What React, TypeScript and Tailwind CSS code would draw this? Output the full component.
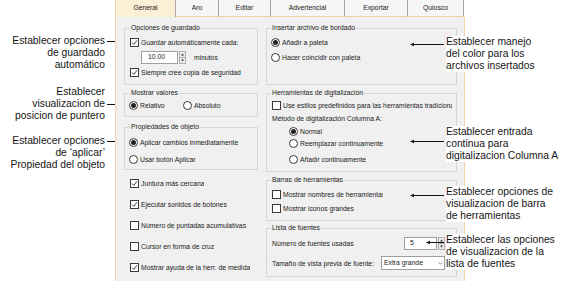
import React from 'react'

const ui = "text-[6.8px] leading-[9px] text-[#1a1a1a] whitespace-nowrap"

function Box({ checked }: { checked?: boolean }) {
  return (
    <span className="w-[9px] h-[9px] shrink-0 border border-[#3a3a3a] bg-white flex items-center justify-center">
      {checked && (
        <svg viewBox="0 0 7 7" className="w-[7px] h-[7px]"><path d="M1 3.6 L2.8 5.4 L6 1.3" fill="none" stroke="#2a2a2a" strokeWidth="0.9" /></svg>
      )}
    </span>
  )
}

function Dot({ on }: { on?: boolean }) {
  return (
    <span className="w-[9px] h-[9px] shrink-0 rounded-full border border-[#3a3a3a] bg-white flex items-center justify-center">
      {on && <span className="w-[5px] h-[5px] rounded-full bg-[#222]" />}
    </span>
  )
}

function Check({ label, checked, className = '', clip }: { label: string; checked?: boolean; className?: string; clip?: string }) {
  return (
    <div className={`flex items-center gap-[2px] h-[9px] overflow-hidden ${className}`}>
      <Box checked={checked} />
      <span className={`${ui} overflow-hidden ${clip ?? ''}`}>{label}</span>
    </div>
  )
}

function Radio({ label, on, className = '' }: { label: string; on?: boolean; className?: string }) {
  return (
    <div className={`flex items-center gap-[2px] h-[9px] ${className}`}>
      <Dot on={on} />
      <span className={ui}>{label}</span>
    </div>
  )
}

function Spinner() {
  return (
    <span className="w-[7px] h-[13px] shrink-0 border border-[#b0b0b0] bg-[#ececec] flex flex-col">
      <svg viewBox="0 0 5 5" className="w-[5px] h-[5.5px]"><path d="M1 3.6 L2.5 1.6 L4 3.6Z" fill="#333" /></svg>
      <span className="h-px bg-[#b0b0b0]" />
      <svg viewBox="0 0 5 5" className="w-[5px] h-[5.5px]"><path d="M1 1.4 L2.5 3.4 L4 1.4Z" fill="#333" /></svg>
    </span>
  )
}

function Group({ title, children, className = '' }: { title: string; children: React.ReactNode; className?: string }) {
  return (
    <fieldset className={`border border-[#d6d6d6] px-[5px] min-w-0 ${className}`}>
      <legend className="px-[1px] text-[6.8px] leading-[8px] text-[#1a1a1a] whitespace-nowrap">{title}</legend>
      {children}
    </fieldset>
  )
}

function ArrowLeft({ w }: { w: number }) {
  return (
    <svg width={w} height={5} className="shrink-0" viewBox={`0 0 ${w} 5`}>
      <path d={`M0 2.5 L4 0.8 L4 4.2Z`} fill="#111" />
      <line x1="3" y1="2.5" x2={w} y2="2.5" stroke="#111" strokeWidth="1" />
    </svg>
  )
}

function ArrowRight() {
  return (
    <svg width={15} height={5} viewBox="0 0 15 5" className="shrink-0 ml-[2px] mr-[-17px]">
      <line x1="0" y1="2.5" x2="12" y2="2.5" stroke="#111" strokeWidth="1" />
      <path d="M15 2.5 L11 0.8 L11 4.2Z" fill="#111" />
    </svg>
  )
}

const tabs = [
  { label: 'General', w: 'w-[61px]' },
  { label: 'Aro', w: 'w-[43px]' },
  { label: 'Editar', w: 'w-[52px]' },
  { label: 'Advertencial', w: 'w-[74px]' },
  { label: 'Exportar', w: 'w-[63px]' },
  { label: 'Quiosco', w: 'w-[56px]' },
]

export default function App() {
  return (
    <div className="relative w-[569px] h-[281px] bg-white overflow-hidden flex font-['Liberation_Sans',Arial,sans-serif]">
      {/* left callouts */}
      <div className="w-[115px] shrink-0 flex flex-col items-end pr-[10px] text-[10.3px] leading-[12px] text-[#151515] text-right">
        <div className="mt-[35px] flex flex-col items-end">
          <div className="flex items-center">Establecer opciones<ArrowRight /></div>
          <div>de guardado</div>
          <div>automático</div>
        </div>
        <div className="mt-[15px] flex flex-col items-end">
          <div>Establecer</div>
          <div className="flex items-center">visualizacion de<ArrowRight /></div>
          <div>posicion de puntero</div>
        </div>
        <div className="mt-[13px] flex flex-col items-end">
          <div className="flex items-center">Establecer opciones<ArrowRight /></div>
          <div>de ‘aplicar’</div>
          <div>Propiedad del objeto</div>
        </div>
      </div>

      {/* dialog */}
      <div className="w-[350px] shrink-0 flex flex-col">
        <div className="flex h-[17px]">
          {tabs.map((t, i) => (
            <div
              key={t.label}
              className={`${t.w} h-[17px] flex items-center justify-center text-[6.8px] text-[#1a1a1a] border-r border-[#a6a6a6] ${i === 0 ? 'bg-[#fbefd6] border-l border-l-[#efd7a3]' : 'bg-[#f6f6f6] border-b border-b-[#efd7a3]'}`}
            >
              {t.label}
            </div>
          ))}
        </div>
        <div className="flex-1 flex gap-[8px] pl-[8px] pr-[6px] pt-[7px] bg-[#f0f0f0] border-l border-r border-[#efd7a3]">
          {/* left column */}
          <div className="w-[134px] shrink-0 flex flex-col">
            <Group title="Opciones de guardado">
              <div className="pt-[6px] pb-[7px] flex flex-col">
                <Check checked label="Guardar automáticamente cada:" />
                <div className="mt-[4px] h-[13px] flex items-center ml-[11px]">
                  <span className="w-[37px] h-[13px] bg-white border border-[#a0a0a0] pl-[6px] flex items-center text-[6.8px] text-[#1a1a1a]">10.00</span>
                  <span className="ml-[1px]"><Spinner /></span>
                  <span className={`${ui} ml-[8px]`}>minutos</span>
                </div>
                <Check checked className="mt-[4px]" label="Siempre cree copia de seguridad" />
              </div>
            </Group>
            <Group title="Mostrar valores" className="mt-[4px]">
              <div className="pt-[4px] pb-[6px] flex -ml-[1px]">
                <Radio on label="Relativo" className="w-[54px]" />
                <Radio label="Absoluto" />
              </div>
            </Group>
            <Group title="Propiedades de objeto" className="mt-[6px]">
              <div className="pt-[7px] pb-[5px] flex flex-col -ml-[1px]">
                <Radio on label="Aplicar cambios inmediatamente" />
                <Radio className="mt-[8px]" label="Usar botón Aplicar" />
              </div>
            </Group>
            <div className="mt-[9px] pl-[6px] flex flex-col gap-[12px]">
              <Check checked label="Juntura más cercana" />
              <Check checked label="Ejecutar sonidos de botones" />
              <Check label="Número de puntadas acumulativas" />
              <Check label="Cursor en forma de cruz" />
              <Check checked label="Mostrar ayuda de la herr. de medida" />
            </div>
          </div>

          {/* right column */}
          <div className="w-[191px] shrink-0 flex flex-col">
            <Group title="Insertar archivo de bordado" className="!px-[4px]">
              <div className="pt-[6px] pb-[22px] flex flex-col">
                <Radio on label="Añadir a paleta" />
                <Radio className="mt-[6px]" label="Hacer coincidir con paleta" />
              </div>
            </Group>
            <Group title="Herramientas de digitalización" className="mt-[4px] !px-[4px]">
              <div className="pt-[4px] pb-[7px] flex flex-col">
                <Check className="ml-[1px]" label="Use estilos predefinidos para las herramientas tradicionales" />
                <div className={`${ui} mt-[4px] ml-[1px]`}>Método de digitalización Columna A:</div>
                <Radio on className="mt-[4px] ml-[18px]" label="Normal" />
                <Radio className="mt-[3px] ml-[18px]" label="Reemplazar continuamente" />
                <Radio className="mt-[7px] ml-[18px]" label="Añadir continuamente" />
              </div>
            </Group>
            <Group title="Barras de herramientas" className="mt-[4px] !px-[4px]">
              <div className="pt-[6px] pb-[7px] flex flex-col">
                <Check className="ml-[1px]" clip="w-[100px]" label="Mostrar nombres de herramientas" />
                <Check className="mt-[5px] ml-[1px]" label="Mostrar iconos grandes" />
              </div>
            </Group>
            <Group title="Lista de fuentes" className="mt-[3px] !px-[4px]">
              <div className="pt-[5px] pb-[6px] flex flex-col">
                <div className="h-[13px] flex items-center">
                  <span className={`${ui} w-[132px] ml-[1px]`}>Número de fuentes usadas</span>
                  <span className="w-[33px] h-[13px] bg-white border border-[#a0a0a0] pl-[5px] flex items-center text-[6.8px] text-[#1a1a1a]">5</span>
                  <span className="ml-[1px]"><Spinner /></span>
                </div>
                <div className="mt-[6px] h-[14px] flex items-center">
                  <span className={`${ui} w-[109px] ml-[1px]`}>Tamaño de vista previa de fuente:</span>
                  <span className="w-[64px] h-[14px] bg-white border border-[#a0a0a0] pl-[2px] flex items-center justify-between text-[6.8px] text-[#1a1a1a]">
                    Extra grande
                    <svg viewBox="0 0 6 4" className="w-[5px] h-[3px] mr-[1px]"><path d="M0.5 0.5 L3 3 L5.5 0.5" fill="none" stroke="#444" strokeWidth="0.8" /></svg>
                  </span>
                </div>
              </div>
            </Group>
          </div>
        </div>
      </div>

      {/* right callouts */}
      <div className="absolute left-[410px] top-[36px] flex items-start text-[10.3px] leading-[12px] text-[#151515]">
        <span className="mt-[5.5px]"><ArrowLeft w={34} /></span>
        <div className="ml-[2px] bg-white pr-[2px]">
          <div>Establecer manejo</div>
          <div>del color para los</div>
          <div>archivos insertados</div>
        </div>
      </div>
      <div className="absolute left-[410px] top-[126px] flex items-start text-[10.3px] leading-[12px] text-[#151515]">
        <span className="mt-[12.5px]"><ArrowLeft w={34} /></span>
        <div className="ml-[2px] bg-white pr-[2px]">
          <div>Establecer entrada</div>
          <div>continua para</div>
          <div>digitalizacion Columna A</div>
        </div>
      </div>
      <div className="absolute left-[410px] top-[186px] flex items-start text-[10.3px] leading-[12px] text-[#151515]">
        <span className="mt-[6.5px]"><ArrowLeft w={34} /></span>
        <div className="ml-[2px] bg-white pr-[2px]">
          <div>Establecer opciones de</div>
          <div>visualizacion de barra</div>
          <div>de herramientas</div>
        </div>
      </div>
      <div className="absolute left-[426px] top-[234px] flex items-start text-[10.3px] leading-[12px] text-[#151515]">
        <span className="mt-[5.5px]"><ArrowLeft w={18} /></span>
        <div className="ml-[2px] bg-white pr-[2px]">
          <div>Establecer las opciones</div>
          <div>de visualizacion de la</div>
          <div>lista de fuentes</div>
        </div>
      </div>
    </div>
  )
}
